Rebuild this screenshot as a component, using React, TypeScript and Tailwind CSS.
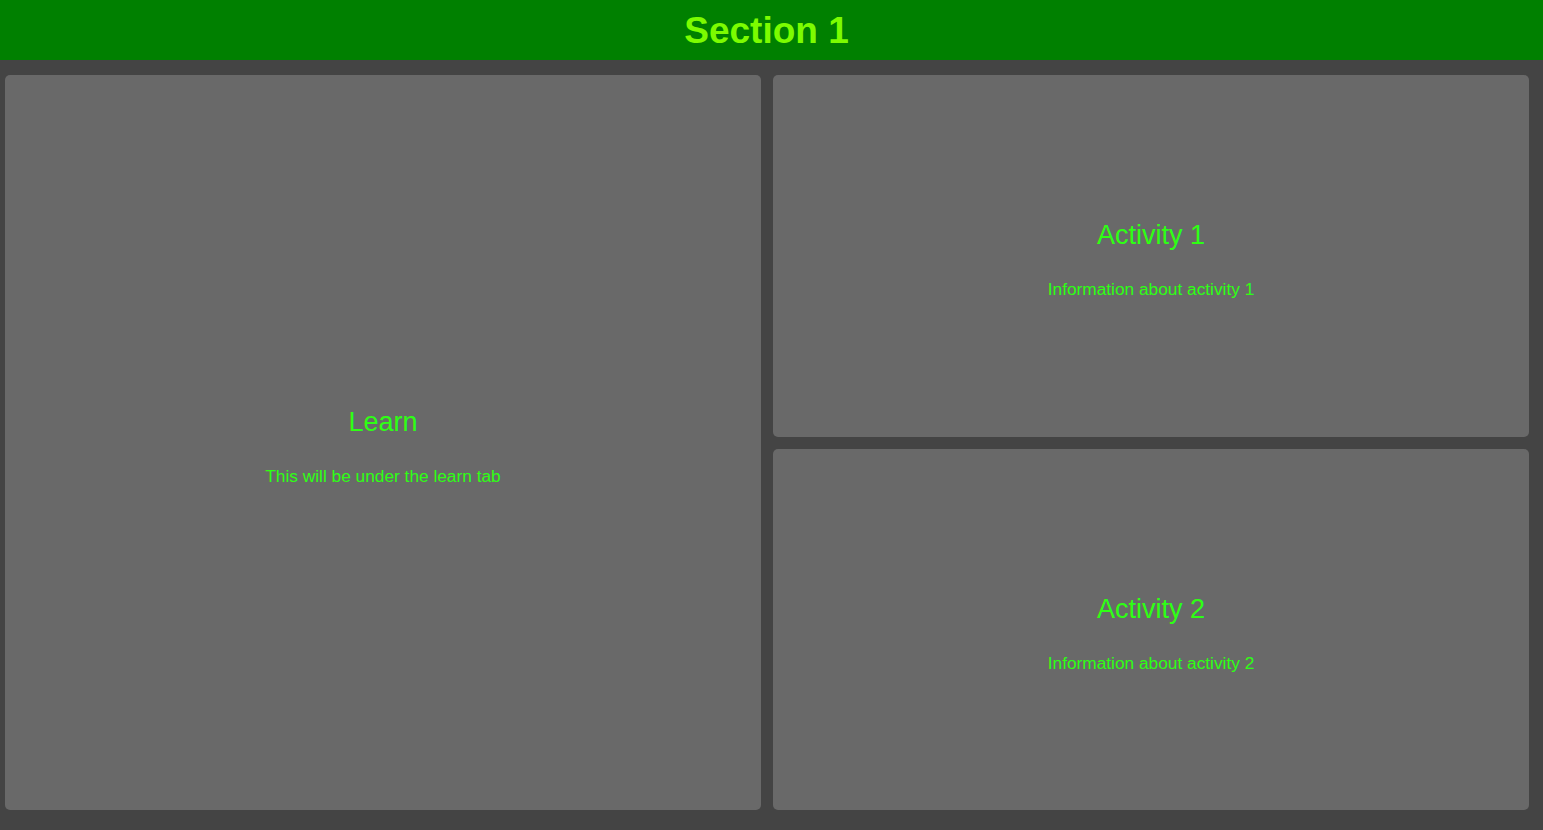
const cards = [
  { title: "Activity 1", body: "Information about activity 1" },
  { title: "Activity 2", body: "Information about activity 2" },
];

function Card({ title, body, className = "" }: { title: string; body: string; className?: string }) {
  return (
    <div className={`flex items-center justify-center rounded-[5px] bg-[#696969] ${className}`}>
      <div className="flex flex-col items-center gap-[28px] pt-[8px] text-[#2eff14]">
        <h2 className="text-[27px] leading-[31px]">{title}</h2>
        <p className="text-[17.3px] leading-[20px]">{body}</p>
      </div>
    </div>
  );
}

export default function App() {
  return (
    <div className="flex h-[830px] flex-col bg-[#444444] font-[Liberation_Sans,Arial,sans-serif]">
      <header className="flex h-[60px] shrink-0 items-center justify-center bg-[#008000] pr-[10px]">
        <h1 className="text-[37px] font-bold leading-none text-[#7cfc00]">Section 1</h1>
      </header>
      <main className="grid flex-1 grid-cols-2 grid-rows-2 gap-[12px] pt-[15px] pb-[20px] pl-[5px] pr-[14px]">
        <Card title="Learn" body="This will be under the learn tab" className="row-span-2" />
        {cards.map((c) => (
          <Card key={c.title} title={c.title} body={c.body} />
        ))}
      </main>
    </div>
  );
}
